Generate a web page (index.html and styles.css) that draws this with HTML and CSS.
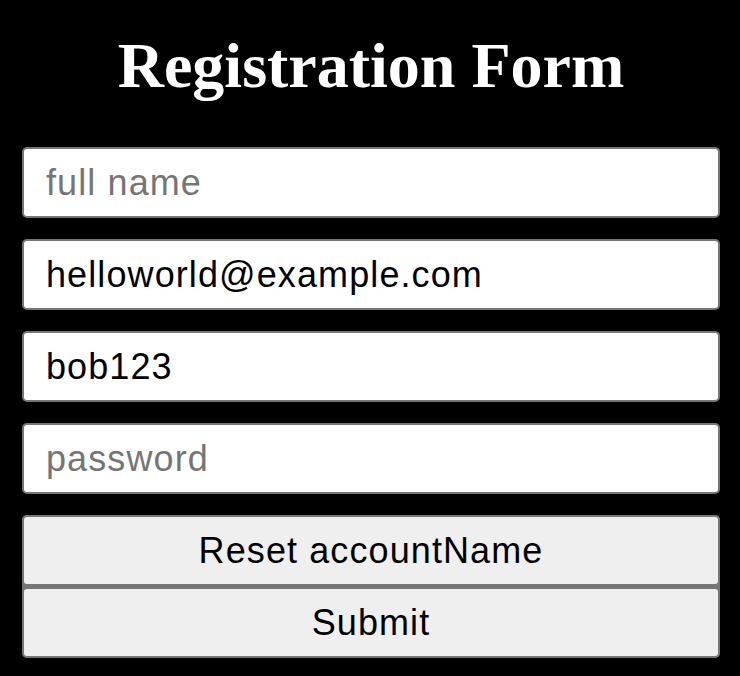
FILE: index.html
```html
<!DOCTYPE html>
<html>
<head>
<meta charset="utf-8">
<link rel="stylesheet" href="styles.css">
</head>
<body>
<form class="form">
  <h1 class="title">Registration Form</h1>
  <input class="field" type="text" placeholder="full name">
  <input class="field" type="email" value="helloworld@example.com">
  <input class="field" type="text" value="bob123">
  <input class="field" type="password" placeholder="password">
  <div class="buttons">
    <button class="btn" type="button">Reset accountName</button>
    <button class="btn" type="submit">Submit</button>
  </div>
</form>
</body>
</html>
```
FILE: styles.css
```css
html, body {
  margin: 0;
  padding: 0;
  background: #000;
}
.form {
  display: flex;
  flex-direction: column;
  padding: 0 20px 0 22px;
  gap: 21px;
}
.title {
  margin: 28px 0 22px;
  font-family: "Liberation Serif", serif;
  font-weight: bold;
  font-size: 64px;
  line-height: 76px;
  color: #fff;
  text-align: center;
}
.field {
  box-sizing: border-box;
  height: 71px;
  margin: 0;
  padding: 0 22px;
  border: 2px solid #767676;
  border-radius: 5px;
  background: #fff;
  font-family: "Liberation Sans", Arial, sans-serif;
  font-size: 36px;
  letter-spacing: 1.1px;
  color: #000;
  outline: none;
}
.field::placeholder {
  color: #757575;
}
.buttons {
  display: flex;
  flex-direction: column;
  gap: 1px;
  background: #767676;
  border-radius: 5px;
}
.btn {
  box-sizing: border-box;
  height: 71px;
  margin: 0;
  border: 2px solid #767676;
  border-radius: 5px;
  background: #efefef;
  font-family: "Liberation Sans", Arial, sans-serif;
  font-size: 36px;
  letter-spacing: 1.1px;
  color: #000;
}
```
